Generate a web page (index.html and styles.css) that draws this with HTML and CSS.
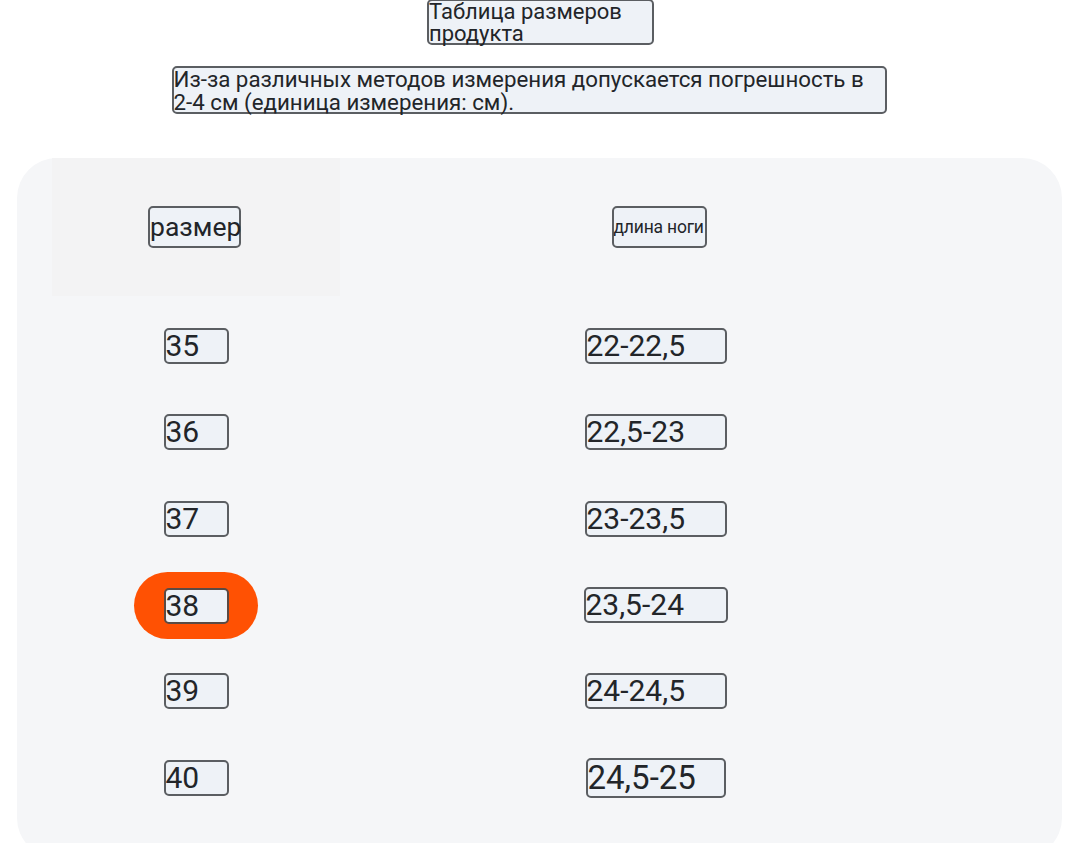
FILE: index.html
```html
<!DOCTYPE html>
<html lang="ru">
<head>
<meta charset="utf-8">
<title>Таблица размеров продукта</title>
<link rel="stylesheet" href="styles.css">
</head>
<body>
<header class="head">
  <div class="tbox title">Таблица размеров продукта</div>
  <div class="tbox desc">Из-за различных методов измерения допускается погрешность в 2-4 см (единица измерения: см).</div>
</header>
<section class="card">
  <div class="grid">
    <div class="cell hcell shaded"><span class="tbox h-size">размер</span></div>
    <div class="cell hcell"><span class="tbox h-len">длина ноги</span></div>

    <div class="cell"><span class="tbox num">35</span></div>
    <div class="cell"><span class="tbox rng">22-22,5</span></div>

    <div class="cell"><span class="tbox num">36</span></div>
    <div class="cell"><span class="tbox rng">22,5-23</span></div>

    <div class="cell"><span class="tbox num">37</span></div>
    <div class="cell"><span class="tbox rng">23-23,5</span></div>

    <div class="cell"><span class="pill"><span class="tbox num">38</span></span></div>
    <div class="cell"><span class="tbox rng wide">23,5-24</span></div>

    <div class="cell"><span class="tbox num">39</span></div>
    <div class="cell"><span class="tbox rng">24-24,5</span></div>

    <div class="cell"><span class="tbox num">40</span></div>
    <div class="cell"><span class="tbox rng big">24,5-25</span></div>
  </div>
</section>
</body>
</html>
```

FILE: styles.css
```css
* { box-sizing: border-box; }
html, body { margin: 0; padding: 0; background: #ffffff; }
body {
  font-family: Roboto, "Noto Sans", "Liberation Sans", sans-serif;
  color: #222529;
  width: 1080px;
  height: 843px;
  overflow: hidden;
}
.tbox {
  display: inline-block;
  background: #eef2f7;
  border: 2px solid #5b5e62;
  border-radius: 5px;
  white-space: nowrap;
  text-align: left;
  overflow: visible;
  padding: 0;
}
.head {
  display: flex;
  flex-direction: column;
  align-items: center;
}
.title {
  width: 227px;
  height: 46px;
  margin-top: -1px;
  margin-left: 1px;
  font-size: 22px;
  line-height: 22px;
  white-space: normal;
}
.desc {
  width: 715px;
  height: 48px;
  margin-top: 21px;
  margin-right: 22px;
  font-size: 22.3px;
  line-height: 23px;
  white-space: normal;
}
.card {
  margin: 44px 0 0 17px;
  width: 1045px;
  height: 700px;
  background: #f5f6f8;
  border-radius: 40px;
  padding: 0 0 0 35px;
}
.grid {
  display: grid;
  grid-template-columns: 288px 632px;
  grid-template-rows: auto repeat(6, 86.3px);
}
.hcell {
  height: 138px;
  margin-bottom: 7px;
}
.cell {
  display: flex;
  align-items: center;
  justify-content: center;
}
.shaded { background: #f3f3f4; }
.h-size {
  width: 93px;
  height: 42px;
  font-size: 26.5px;
  line-height: 38px;
  margin-right: 3px;
}
.h-len {
  width: 95px;
  height: 42px;
  font-size: 17.5px;
  line-height: 38px;
  margin-left: 6px;
  letter-spacing: -0.2px;
}
.num {
  width: 65px;
  height: 36px;
  font-size: 30px;
  line-height: 32px;
}
.rng {
  width: 142px;
  height: 36px;
  font-size: 30px;
  line-height: 32px;
  margin-right: 1px;
}
.rng.wide { width: 144px; }
.rng.big {
  width: 140px;
  height: 40px;
  font-size: 33px;
  line-height: 36px;
}
.pill {
  display: flex;
  align-items: center;
  justify-content: center;
  width: 124px;
  height: 67px;
  border-radius: 34px;
  background: #ff5103;
  margin-top: 1px;
}
.pill .num { border-color: #5a4a44; }
```
